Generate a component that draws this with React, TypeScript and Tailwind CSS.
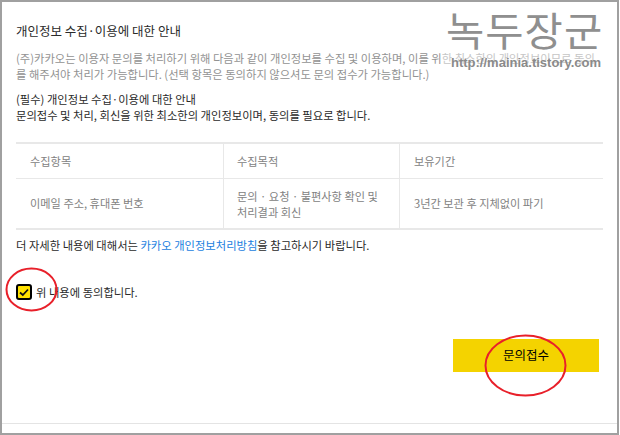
export default function App() {
  return (
    <div className="relative h-[435px] w-[620px] overflow-hidden bg-white text-[#2a2a2a] [font-family:'Noto_Sans_CJK_KR','Noto_Sans',sans-serif]">
      <div className="h-[435px] w-[619px] border-2 border-[#a0a0a0] px-[14px] pt-[20px]">
        <h1 className="text-[12.5px] leading-[18px] font-normal">개인정보 수집·이용에 대한 안내</h1>
        <p className="mt-[10px] w-[590px] text-[11.3px] leading-[16px] text-[#929292]">
          (주)카카오는 이용자 문의를 처리하기 위해 다음과 같이 개인정보를 수집 및 이용하며, 이를 위<span className="text-[#c6c6c6]">한 최소한의 개인정보이므로 동의</span>
          <br />
          를 해주셔야 처리가 가능합니다. (선택 항목은 동의하지 않으셔도 문의 접수가 가능합니다.)
        </p>
        <p className="mt-[10px] text-[11.3px] leading-[15.5px]">
          (필수) 개인정보 수집·이용에 대한 안내
          <br />
          문의접수 및 처리, 회신을 위한 최소한의 개인정보이며, 동의를 필요로 합니다.
        </p>
        <div className="mt-[19px] grid w-[587px] grid-cols-[208px_176px_203px] border-y-2 border-[#e8e8e8] text-[11.2px] text-[#828282]">
          <div className="flex h-[35px] items-center border-r border-b border-[#e8e8e8] pl-[14px]">수집항목</div>
          <div className="flex h-[35px] items-center border-r border-b border-[#e8e8e8] pl-[13px]">수집목적</div>
          <div className="flex h-[35px] items-center border-b border-[#e8e8e8] pl-[14px]">보유기간</div>
          <div className="flex h-[49px] items-center border-r border-[#e8e8e8] pl-[14px]">이메일 주소, 휴대폰 번호</div>
          <div className="flex h-[49px] items-center border-r border-[#e8e8e8] pl-[13px] leading-[16px]">문의 · 요청 · 불편사항 확인 및<br />처리결과 회신</div>
          <div className="flex h-[49px] items-center pl-[14px]">3년간 보관 후 지체없이 파기</div>
        </div>
        <p className="mt-[7px] text-[11.3px] leading-[16px]">
          더 자세한 내용에 대해서는 <span className="text-[#1a7ee0]">카카오 개인정보처리방침</span>을 참고하시기 바랍니다.
        </p>
        <div className="mt-[31px] flex items-center gap-[4px] text-[11.3px]">
          <span className="flex h-[16px] w-[16px] items-center justify-center rounded-[3px] border-2 border-black bg-[#ffe100]">
            <svg width="10" height="9" viewBox="0 0 10 9" fill="none"><path d="M1 4.5 L3.8 7 L9 1.5" stroke="#111" strokeWidth="1.8" /></svg>
          </span>
          <span>위 내용에 동의합니다.</span>
        </div>
        <div className="mt-[38px] flex justify-end pr-[4px]">
          <button className="flex h-[33px] w-[146px] items-center justify-center bg-[#f4d300] text-[12.5px] text-black">문의접수</button>
        </div>
        <div className="-mx-[14px] mt-[51px] h-[1px] bg-[#e4e4e4]" />
      </div>

      <div className="pointer-events-none absolute left-[446px] top-[6px] text-[40px] leading-[46px] font-normal tracking-[1px] text-[#8f8f8f] [font-family:'Noto_Sans_CJK_KR',sans-serif] origin-left scale-x-[1.04]">녹두장군</div>
      <div className="pointer-events-none absolute left-[451px] top-[54px] text-[13px] leading-[18px] font-bold text-[#8a8a8a] [font-family:'Liberation_Sans',sans-serif]">http://mainia.tistory.com</div>

      <svg className="pointer-events-none absolute left-0 top-0" width="620" height="435" fill="none">
        <ellipse cx="31.5" cy="289.5" rx="25" ry="21" stroke="#e8202a" strokeWidth="2" />
        <ellipse cx="525.5" cy="365.5" rx="40" ry="30" stroke="#e8202a" strokeWidth="2" />
      </svg>
    </div>
  );
}
